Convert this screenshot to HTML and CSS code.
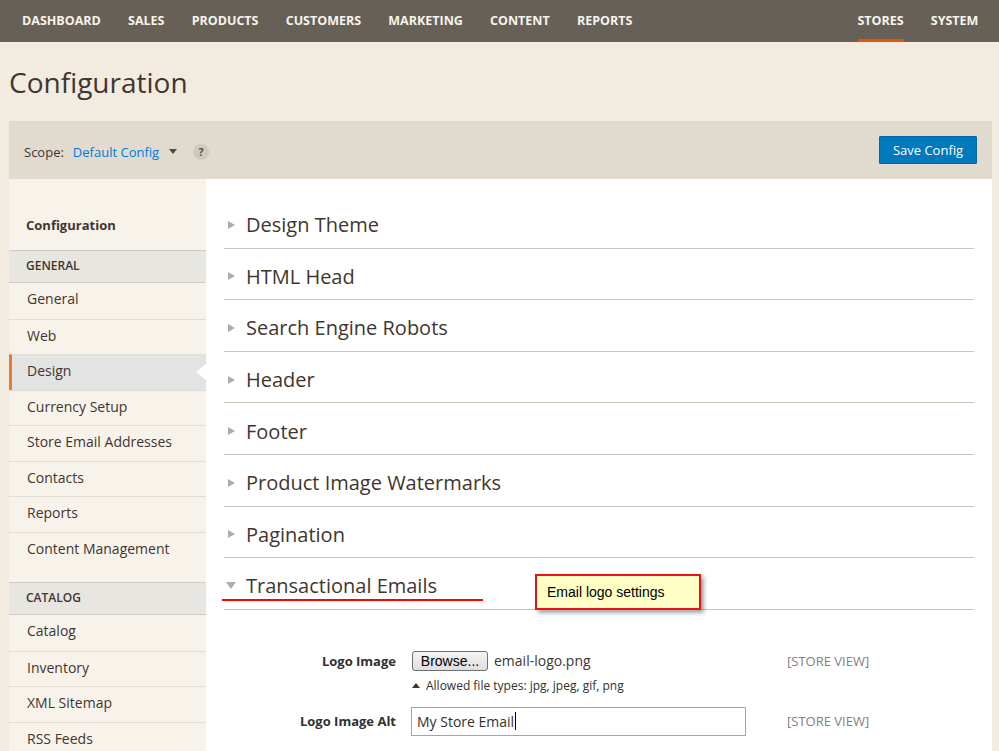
FILE: index.html
```html
<!DOCTYPE html>
<html lang="en">
<head>
<meta charset="utf-8">
<title>Configuration</title>
<link rel="stylesheet" href="styles.css">
</head>
<body>
<header class="nav">
  <ul class="nav-list">
    <li>DASHBOARD</li>
    <li>SALES</li>
    <li>PRODUCTS</li>
    <li>CUSTOMERS</li>
    <li>MARKETING</li>
    <li>CONTENT</li>
    <li>REPORTS</li>
  </ul>
  <ul class="nav-list">
    <li class="active">STORES</li>
    <li>SYSTEM</li>
  </ul>
</header>
<div class="page">
  <h1 class="page-title">Configuration</h1>
  <div class="scope-bar">
    <div class="scope">
      <span class="scope-label">Scope:</span>
      <span class="scope-value">Default Config</span>
      <span class="scope-caret"></span>
      <span class="scope-help">?</span>
    </div>
    <button class="btn-primary">Save Config</button>
  </div>
  <div class="columns">
    <aside class="sidebar">
      <div class="side-title">Configuration</div>
      <div class="side-group">GENERAL</div>
      <div class="side-item">General</div>
      <div class="side-item">Web</div>
      <div class="side-item active">Design</div>
      <div class="side-item">Currency Setup</div>
      <div class="side-item">Store Email Addresses</div>
      <div class="side-item">Contacts</div>
      <div class="side-item">Reports</div>
      <div class="side-item">Content Management</div>
      <div class="side-group spaced">CATALOG</div>
      <div class="side-item">Catalog</div>
      <div class="side-item">Inventory</div>
      <div class="side-item">XML Sitemap</div>
      <div class="side-item">RSS Feeds</div>
    </aside>
    <main class="content">
      <div class="section"><span class="arrow"></span>Design Theme</div>
      <div class="section"><span class="arrow"></span>HTML Head</div>
      <div class="section"><span class="arrow"></span>Search Engine Robots</div>
      <div class="section"><span class="arrow"></span>Header</div>
      <div class="section"><span class="arrow"></span>Footer</div>
      <div class="section"><span class="arrow"></span>Product Image Watermarks</div>
      <div class="section"><span class="arrow"></span>Pagination</div>
      <div class="section open"><span class="arrow down"></span>Transactional Emails
        <span class="red-underline"></span>
        <span class="callout">Email logo settings</span>
      </div>
      <div class="form">
        <div class="form-row">
          <label class="form-label">Logo Image</label>
          <div class="form-field">
            <div class="file-line">
              <span class="browse">Browse...</span>
              <span class="file-name">email-logo.png</span>
            </div>
            <div class="note"><span class="note-arrow"></span>Allowed file types: jpg, jpeg, gif, png</div>
          </div>
          <div class="form-scope">[STORE VIEW]</div>
        </div>
        <div class="form-row second">
          <label class="form-label">Logo Image Alt</label>
          <div class="form-field">
            <div class="text-input">My Store Email<span class="caret"></span></div>
          </div>
          <div class="form-scope">[STORE VIEW]</div>
        </div>
      </div>
    </main>
  </div>
</div>
</body>
</html>
```
FILE: styles.css
```css
html, body {
  margin: 0;
  padding: 0;
  overflow: hidden;
}
body {
  background: #f2ebe0;
  font-family: "Open Sans", "Liberation Sans", sans-serif;
  color: #41362f;
  width: 999px;
  height: 751px;
}
ul { list-style: none; margin: 0; padding: 0; }

.nav {
  height: 42px;
  background: #676056;
  display: flex;
  justify-content: space-between;
  padding: 0 7px 0 9px;
}
.nav-list {
  display: flex;
}
.nav-list li {
  height: 42px;
  line-height: 41px;
  padding: 0 13.6px;
  font-size: 12.5px;
  font-weight: 700;
  color: #f7f3eb;
  box-sizing: border-box;
  position: relative;
}
.nav-list li:first-child { padding-left: 13px; }
.nav-list li.active::after {
  content: "";
  position: absolute;
  left: 13.6px;
  right: 13.6px;
  bottom: 0;
  height: 3px;
  background: #eb5202;
}

.page {
  padding: 0 7px 0 9px;
}
.page-title {
  margin: 0;
  height: 79px;
  display: flex;
  align-items: center;
  font-size: 28px;
  font-weight: 400;
  color: #41362f;
}

.scope-bar {
  height: 58px;
  background: #e0dacf;
  display: flex;
  align-items: center;
  justify-content: space-between;
  padding: 0 15px 0 15px;
}
.scope {
  display: flex;
  align-items: center;
  font-size: 13px;
  padding-top: 3px;
}
.scope-label { color: #41362f; }
.scope-value { color: #007bdb; margin-left: 9px; }
.scope-caret {
  width: 0;
  height: 0;
  border-left: 4px solid transparent;
  border-right: 4px solid transparent;
  border-top: 5px solid #514943;
  margin-left: 10px;
}
.scope-help {
  width: 16px;
  height: 16px;
  border-radius: 50%;
  background: #d0c9bd;
  color: #514943;
  font-size: 10px;
  font-weight: 700;
  line-height: 16px;
  text-align: center;
  margin-left: 16px;
}
.btn-primary {
  background: #0079bd;
  border: 1px solid #0069a6;
  color: #fff;
  font-family: "Open Sans", sans-serif;
  font-size: 13px;
  height: 28px;
  width: 98px;
  padding: 0;
  border-radius: 1px;
}

.columns {
  display: flex;
  align-items: flex-start;
}
.sidebar {
  width: 197px;
  background: #f7f3eb;
  flex: none;
  padding-bottom: 40px;
}
.side-title {
  height: 71px;
  box-sizing: border-box;
  padding: 37px 0 0 17px;
  font-size: 13px;
  font-weight: 700;
  line-height: 18px;
}
.side-group {
  height: 33px;
  box-sizing: border-box;
  border-top: 1px solid #d1ccc4;
  border-bottom: 1px solid #d1ccc4;
  background: #e8e6e1;
  font-size: 12px;
  font-weight: 600;
  padding-left: 17px;
  line-height: 30px;
}
.side-group.spaced { margin-top: 15px; }
.side-item {
  height: 35.5px;
  box-sizing: border-box;
  border-top: 1px solid #e3ded5;
  font-size: 14px;
  line-height: 31px;
  padding-left: 18px;
  position: relative;
}
.side-group + .side-item { border-top: none; line-height: 32px; }
.side-item.active {
  background: #e3e3e3;
  border-left: 3px solid #eb7a31;
  padding-left: 15px;
}
.side-item.active::after {
  content: "";
  position: absolute;
  right: 0;
  top: 9px;
  border-top: 8px solid transparent;
  border-bottom: 8px solid transparent;
  border-right: 10px solid #fff;
}

.content {
  flex: 1;
  background: #fff;
  padding: 18px 18px 40px 18px;
  min-height: 600px;
}
.section {
  height: 51.6px;
  box-sizing: border-box;
  border-bottom: 1px solid #ccc5b9;
  display: flex;
  align-items: center;
  padding-top: 5px;
  font-size: 20px;
  color: #41362f;
  position: relative;
}
.arrow {
  width: 0;
  height: 0;
  border-top: 4.5px solid transparent;
  border-bottom: 4.5px solid transparent;
  border-left: 7px solid #adadad;
  margin-left: 4px;
  margin-right: 11px;
}
.arrow.down {
  border-left: 5px solid transparent;
  border-right: 5px solid transparent;
  border-top: 7px solid #adadad;
  border-bottom: none;
  margin-left: 2px;
  margin-right: 10px;
}
.red-underline {
  position: absolute;
  left: -2px;
  top: 41px;
  width: 261px;
  height: 2px;
  background: #ff0000;
}
.callout {
  position: absolute;
  left: 311px;
  top: 16px;
  width: 166px;
  height: 36px;
  box-sizing: border-box;
  border: 2px solid #ee1111;
  background: #ffffc6;
  font-family: "Liberation Sans", Arial, sans-serif;
  font-size: 14px;
  color: #000;
  padding-left: 10px;
  line-height: 32px;
  box-shadow: 3px 3px 4px rgba(0,0,0,0.35);
}

.form {
  padding-top: 41px;
}
.form-row {
  display: grid;
  grid-template-columns: 172px 335px auto;
  column-gap: 15px;
  align-items: start;
}
.form-row.second {
  margin-top: 13px;
}
.form-label {
  text-align: right;
  font-size: 13px;
  font-weight: 700;
  color: #303030;
  line-height: 20px;
}
.form-row.second .form-label { line-height: 29px; }
.form-scope {
  font-size: 13px;
  color: #808080;
  line-height: 20px;
  padding-left: 26px;
}
.form-row.second .form-scope { line-height: 29px; }
.file-line {
  display: flex;
  align-items: center;
  height: 20px;
}
.browse {
  display: inline-block;
  box-sizing: border-box;
  width: 76px;
  height: 20px;
  margin-left: 1px;
  border: 1px solid #707070;
  border-radius: 3px;
  background: linear-gradient(#f4f4f4, #dedede);
  font-family: "Liberation Sans", Arial, sans-serif;
  font-size: 14px;
  color: #000;
  line-height: 18px;
  text-align: center;
}
.file-name {
  font-size: 14px;
  color: #41362f;
  margin-left: 6px;
}
.note {
  margin-top: 7px;
  font-size: 12px;
  line-height: 16px;
  color: #303030;
  display: flex;
  align-items: center;
  padding-left: 1px;
}
.note-arrow {
  width: 0;
  height: 0;
  border-left: 4px solid transparent;
  border-right: 4px solid transparent;
  border-bottom: 5px solid #41362f;
  margin-right: 6px;
}
.text-input {
  box-sizing: border-box;
  height: 29px;
  border: 1px solid #75b0e4;
  font-size: 14px;
  color: #303030;
  line-height: 27px;
  padding-left: 5px;
  display: flex;
  align-items: center;
}
.caret {
  display: inline-block;
  width: 1px;
  height: 18px;
  background: #000;
  margin-left: 1px;
}
```
